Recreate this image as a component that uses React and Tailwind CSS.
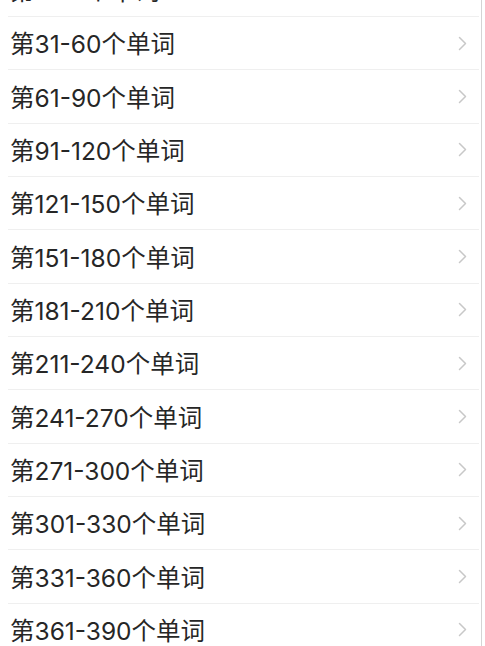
export default function App() {
  const rows = [];
  for (let i = 0; i < 14; i++) {
    const a = i * 30 + 1;
    const b = (i + 1) * 30;
    rows.push(`第${a}-${b}个单词`);
  }
  return (
    <div className="w-[485px] h-[646px] overflow-hidden bg-white">
      <div
        className="w-[482px] border-r-[1.5px] border-[#d4d4d4] -mt-[36.3px]"
        style={{ fontFamily: 'Inter, "Noto Sans CJK SC", sans-serif' }}
      >
        {rows.map((t) => (
          <div
            key={t}
            className="ml-[8px] mr-[2px] h-[53.33px] border-b border-[#efefef] flex items-center justify-between pl-[2px] pr-[12px]"
          >
            <span className="text-[24.5px] leading-none text-[#262626] pt-[3px]">{t}</span>
            <svg width="9" height="15" viewBox="0 0 9 15" fill="none">
              <path d="M1.5 1.5 L7.5 7.5 L1.5 13.5" stroke="#c8c8c8" strokeWidth="1.5" strokeLinecap="round" strokeLinejoin="round" />
            </svg>
          </div>
        ))}
      </div>
    </div>
  );
}
